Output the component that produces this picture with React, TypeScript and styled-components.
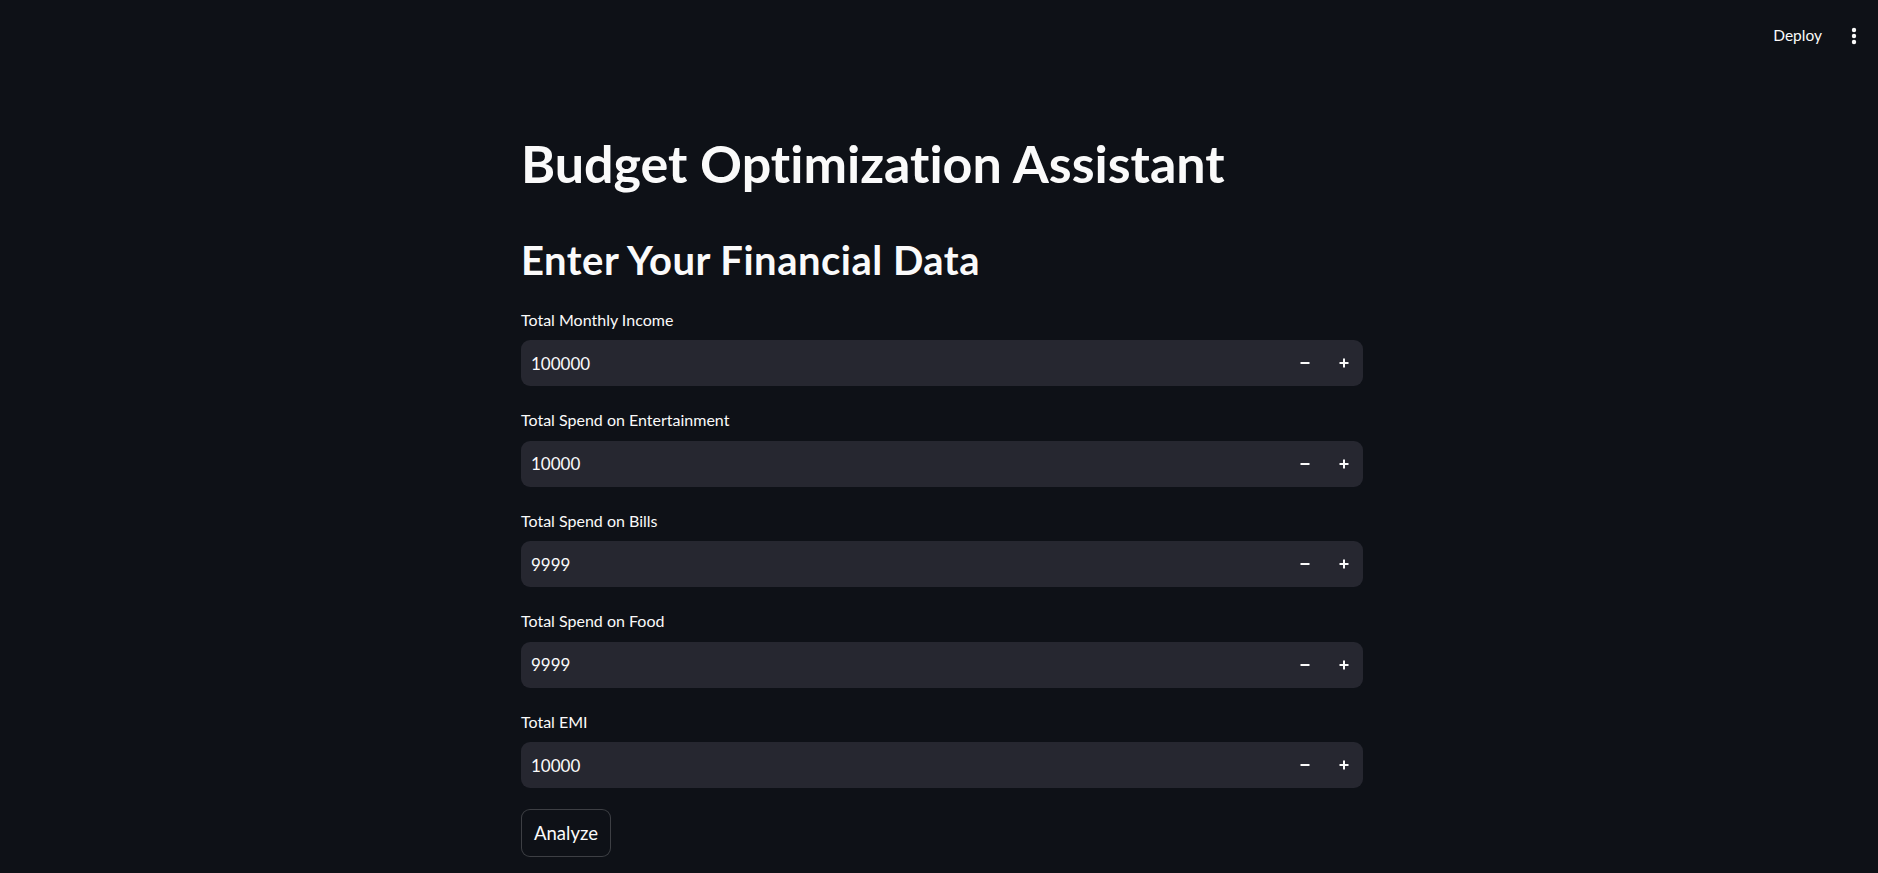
import React from 'react';
import styled, { createGlobalStyle } from 'styled-components';

// Estilos globais: fundo escuro e fonte padrão
const GlobalStyle = createGlobalStyle`
  body {
    margin: 0;
    background-color: #0e1117;
    color: #fafafa;
    font-family: Lato, "Noto Sans", sans-serif;
    font-variant-ligatures: none;
  }
`;

const campos = [
  { label: 'Total Monthly Income', valor: '100000' },
  { label: 'Total Spend on Entertainment', valor: '10000' },
  { label: 'Total Spend on Bills', valor: '9999' },
  { label: 'Total Spend on Food', valor: '9999' },
  { label: 'Total EMI', valor: '10000' },
];

const MenuIcon = () => (
  <svg width="6" height="18" viewBox="0 0 6 18">
    <circle cx="3" cy="3" r="2.2" fill="#fafafa" />
    <circle cx="3" cy="9" r="2.2" fill="#fafafa" />
    <circle cx="3" cy="15" r="2.2" fill="#fafafa" />
  </svg>
);

const MinusIcon = () => (
  <svg width="10" height="10" viewBox="0 0 10 10">
    <rect x="0.5" y="4" width="9" height="2" fill="#fafafa" />
  </svg>
);

const PlusIcon = () => (
  <svg width="10" height="10" viewBox="0 0 10 10">
    <rect x="0.5" y="4" width="9" height="2" fill="#fafafa" />
    <rect x="4" y="0.5" width="2" height="9" fill="#fafafa" />
  </svg>
);

const App: React.FC = () => {
  return (
    <>
      <GlobalStyle />
      <Header>
        <DeployButton>Deploy</DeployButton>
        <MenuButton>
          <MenuIcon />
        </MenuButton>
      </Header>
      <Page>
        <Main>
          <Title>Budget Optimization Assistant</Title>
          <Subtitle>Enter Your Financial Data</Subtitle>
          <Form>
            {campos.map((c) => (
              <Field key={c.label}>
                <Label>{c.label}</Label>
                <InputBox>
                  <Input type="text" defaultValue={c.valor} />
                  <StepButton>
                    <MinusIcon />
                  </StepButton>
                  <StepButton>
                    <PlusIcon />
                  </StepButton>
                </InputBox>
              </Field>
            ))}
          </Form>
          <AnalyzeButton>Analyze</AnalyzeButton>
        </Main>
      </Page>
    </>
  );
};

export default App;

const Header = styled.header`
  height: 72px;
  display: flex;
  justify-content: flex-end;
  align-items: center;
  gap: 27px;
  padding-right: 19px;
`;

const DeployButton = styled.button`
  background: transparent;
  border: none;
  color: #fafafa;
  font-family: Lato, sans-serif;
  font-size: 15.5px;
  padding: 0;
  margin-bottom: 2px;
  cursor: pointer;
`;

const MenuButton = styled.button`
  background: transparent;
  border: none;
  padding: 0 2px;
  display: flex;
  align-items: center;
  margin-bottom: 1px;
`;

const Page = styled.div`
  display: flex;
  justify-content: center;
  padding-left: 6px;
`;

const Main = styled.main`
  width: 842px;
  display: flex;
  flex-direction: column;
  align-items: flex-start;
  padding-top: 60px;
`;

const Title = styled.h1`
  margin: 0;
  font-size: 52px;
  font-weight: 700;
  line-height: 1.2;
  white-space: nowrap;
`;

const Subtitle = styled.h2`
  margin: 41.5px 0 0;
  font-size: 40px;
  font-weight: 700;
  letter-spacing: 0.5px;
  line-height: 1.2;
`;

const Form = styled.div`
  margin-top: 25.8px;
  width: 100%;
  display: flex;
  flex-direction: column;
  gap: 24px;
`;

const Field = styled.div`
  display: flex;
  flex-direction: column;
  gap: 11.3px;
`;

const Label = styled.label`
  font-size: 16px;
  line-height: 1.2;
  color: #fafafa;
`;

const InputBox = styled.div`
  height: 46px;
  display: flex;
  align-items: center;
  background-color: #262730;
  border-radius: 9px;
`;

const Input = styled.input`
  flex: 1;
  min-width: 0;
  height: 100%;
  background: transparent;
  border: none;
  outline: none;
  color: #fafafa;
  font-family: Lato, sans-serif;
  font-size: 17px;
  padding: 0 0 0 10px;
`;

const StepButton = styled.button`
  width: 38.5px;
  height: 100%;
  background: transparent;
  border: none;
  padding: 0;
  display: flex;
  align-items: center;
  justify-content: center;
  cursor: pointer;
`;

const AnalyzeButton = styled.button`
  margin-top: 21px;
  width: 90px;
  height: 48px;
  background-color: #0e1117;
  border: 1px solid rgba(250, 250, 250, 0.2);
  border-radius: 9px;
  color: #fafafa;
  font-family: Lato, sans-serif;
  font-size: 18.5px;
  padding: 0;
  cursor: pointer;
`;
